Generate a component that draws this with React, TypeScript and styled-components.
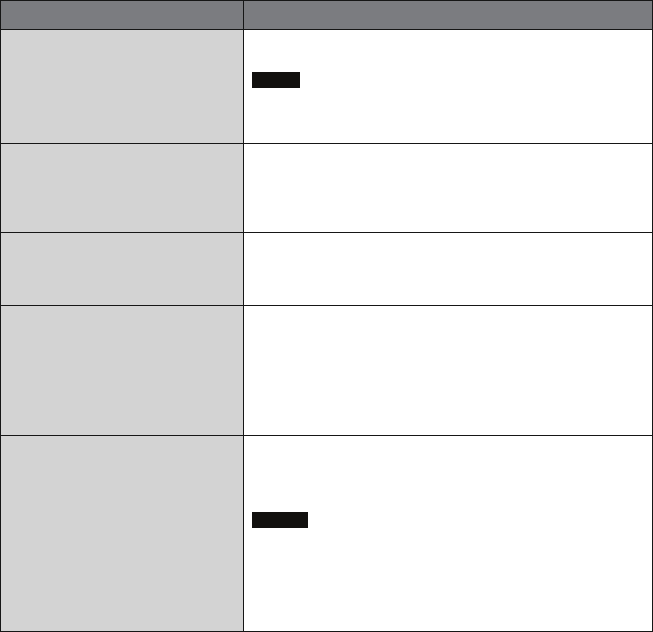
import styled, { createGlobalStyle } from 'styled-components';

const GlobalStyle = createGlobalStyle`
  html, body {
    margin: 0;
    padding: 0;
    background: #ffffff;
    font-family: "Liberation Sans", Arial, sans-serif;
  }
`

const Table = styled.div`
  width: 653px;
  box-sizing: border-box;
  border: 1px solid #161616;
  display: flex;
  flex-direction: column;
`

const Row = styled.div<{ $height: number; $head?: boolean }>`
  display: grid;
  grid-template-columns: 243px 1fr;
  height: ${p => p.$height}px;
  box-sizing: border-box;
  border-top: ${p => (p.$head ? 'none' : '1px solid #161616')};
`

const KeyCell = styled.div<{ $head?: boolean }>`
  background: ${p => (p.$head ? '#7b7c80' : '#d3d3d3')};
  border-right: 1px solid #161616;
`

const ValueCell = styled.div<{ $head?: boolean; $offset?: number }>`
  background: ${p => (p.$head ? '#7b7c80' : '#ffffff')};
  display: flex;
  flex-direction: column;
  align-items: flex-start;
  padding: ${p => p.$offset ?? 0}px 0 0 8px;
`

const Tag = styled.span<{ $width: number }>`
  display: block;
  width: ${p => p.$width}px;
  height: 16px;
  background: #12100e;
`

const rows = [
  { height: 114, tag: 48, offset: 42 },
  { height: 89 },
  { height: 73 },
  { height: 130 },
  { height: 196, tag: 56, offset: 76 },
]

export default function App() {
  return (
    <>
      <GlobalStyle />
      <Table>
        <Row $height={28} $head>
          <KeyCell $head />
          <ValueCell $head />
        </Row>
        {rows.map((r, i) => (
          <Row key={i} $height={r.height}>
            <KeyCell />
            <ValueCell $offset={r.offset}>
              {r.tag && <Tag $width={r.tag} />}
            </ValueCell>
          </Row>
        ))}
      </Table>
    </>
  )
}
